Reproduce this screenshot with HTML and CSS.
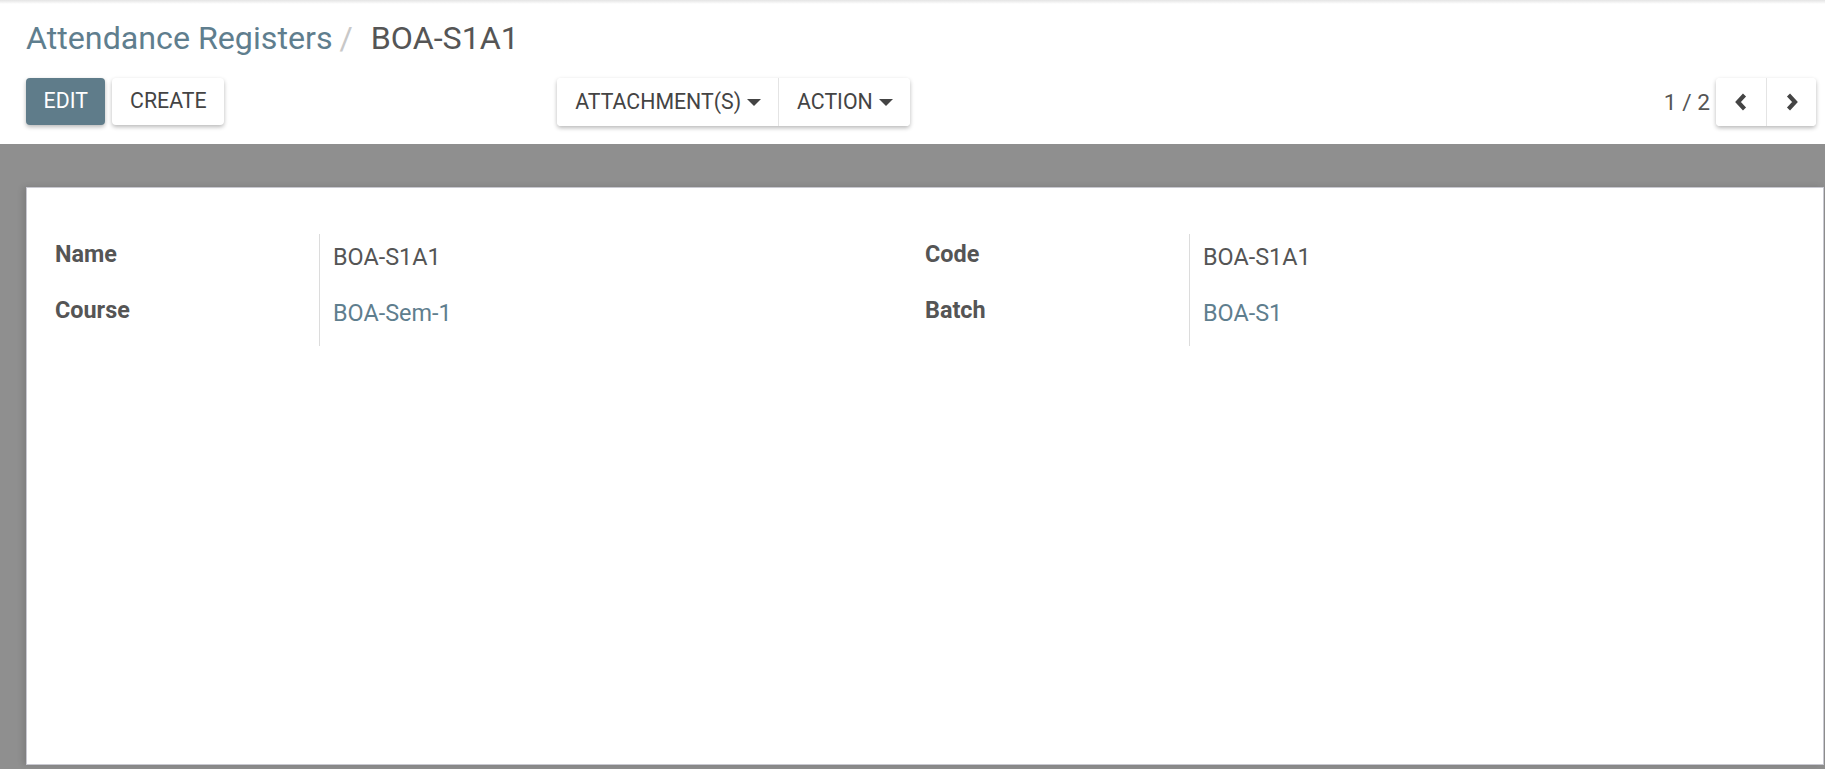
FILE: index.html
```html
<!DOCTYPE html>
<html>
<head>
<meta charset="utf-8">
<link rel="stylesheet" href="styles.css">
</head>
<body>
<div class="cp">
  <div class="breadcrumb">
    <a class="bc-link">Attendance Registers</a><span class="bc-sep">/</span><span class="bc-active">BOA-S1A1</span>
  </div>
  <div class="cp-row">
    <div class="cp-left">
      <div class="cp-buttons">
        <button class="btn btn-primary">EDIT</button>
        <button class="btn btn-secondary">CREATE</button>
      </div>
      <div class="btn-group">
        <button class="btn btn-secondary gbtn">ATTACHMENT(S)<span class="caret"></span></button>
        <button class="btn btn-secondary gbtn">ACTION<span class="caret"></span></button>
      </div>
    </div>
    <div class="cp-right">
      <span class="pager-value">1 / 2</span>
      <div class="btn-group pager">
        <button class="btn btn-secondary pbtn"><svg width="14" height="20" viewBox="0 0 14 20"><polyline points="10.5,3 4,10 10.5,17" fill="none" stroke="#444" stroke-width="4.2" stroke-linejoin="miter"/></svg></button>
        <button class="btn btn-secondary pbtn"><svg width="14" height="20" viewBox="0 0 14 20"><polyline points="3.5,3 10,10 3.5,17" fill="none" stroke="#444" stroke-width="4.2" stroke-linejoin="miter"/></svg></button>
      </div>
    </div>
  </div>
</div>
<div class="content">
  <div class="sheet">
    <div class="groups">
      <div class="group">
        <div class="label">Name</div><div class="value">BOA-S1A1</div>
        <div class="label">Course</div><div class="value"><a class="link">BOA-Sem-1</a></div>
      </div>
      <div class="group">
        <div class="label">Code</div><div class="value">BOA-S1A1</div>
        <div class="label">Batch</div><div class="value"><a class="link">BOA-S1</a></div>
      </div>
    </div>
  </div>
</div>
</body>
</html>
```
FILE: styles.css
```css
html, body {
  margin: 0;
  padding: 0;
  height: 100%;
  overflow: hidden;
}
body {
  font-family: Roboto, "Noto Sans", sans-serif;
  color: #555;
  background: #8f8f8f;
  display: flex;
  flex-direction: column;
}
.cp {
  background: linear-gradient(#e4e4e4, #fff 4px);
  height: 144px;
  box-sizing: border-box;
  padding: 20px 9px 0 26px;
  flex: none;
}
.breadcrumb {
  font-size: 32.2px;
  line-height: 37px;
  height: 37px;
  white-space: nowrap;
}
.bc-link { color: #5f7e8e; }
.bc-sep { color: #c8c8c8; padding: 0 18px 0 7px; }
.bc-active { color: #555; }
.cp-row {
  display: flex;
  margin-top: 21px;
  height: 48px;
}
.cp-left {
  flex: 1;
  display: flex;
  justify-content: space-between;
  padding-right: 22.5px;
}
.cp-buttons { display: flex; gap: 7px; }
.cp-right {
  flex: 1;
  display: flex;
  justify-content: flex-end;
  align-items: center;
}
.btn {
  font-family: Roboto, sans-serif;
  font-size: 21.3px;
  height: 48px;
  border: none;
  border-radius: 4px;
  padding: 0 17.6px 2px;
  display: flex;
  align-items: center;
  box-shadow: 0 2px 4px rgba(0,0,0,0.28);
  cursor: pointer;
}
.btn-primary { background: #5f7c8a; color: #fff; height: 47px; }
.btn-secondary { background: #fff; color: #444; height: 47px; }
.btn-group {
  display: flex;
  border-radius: 4px;
  box-shadow: 0 2px 4px rgba(0,0,0,0.28);
}
.btn-group .btn { box-shadow: none; border-radius: 0; height: 48px; }
.btn-group .btn:first-child { border-radius: 4px 0 0 4px; }
.btn-group .btn:last-child { border-radius: 0 4px 4px 0; border-left: 1px solid #e4e4e4; }
.gbtn { padding: 0 17px 2px 18px; }
.caret {
  display: inline-block;
  width: 0; height: 0;
  border-top: 7px solid #444;
  border-left: 7px solid transparent;
  border-right: 7px solid transparent;
  margin-left: 6px;
  margin-top: 2px;
}
.pager-value {
  font-size: 22.75px;
  color: #555;
  margin-right: 6px;
}
.pbtn {
  width: 50px;
  padding: 0;
  justify-content: center;
}
.content {
  flex: 1;
  padding: 43px 1px 4px 26px;
  display: flex;
}
.sheet {
  flex: 1;
  background: #fff;
  border: 1px solid #c8c8d0;
  box-shadow: -3px 0 6px rgba(0,0,0,0.12);
}
.groups {
  display: grid;
  grid-template-columns: 1fr 1fr;
  padding: 46px 28px 0 28px;
}
.group {
  display: grid;
  grid-template-columns: 264px 1fr;
  grid-auto-rows: 56px;
  font-size: 23.4px;
  line-height: 26px;
}
.label {
  font-weight: bold;
  color: #555;
  padding-top: 7px;
}
.value {
  border-left: 1px solid #dcdcdc;
  padding: 9.5px 0 0 13px;
  color: #555;
}
.link { color: #5f7e8e; }
```
